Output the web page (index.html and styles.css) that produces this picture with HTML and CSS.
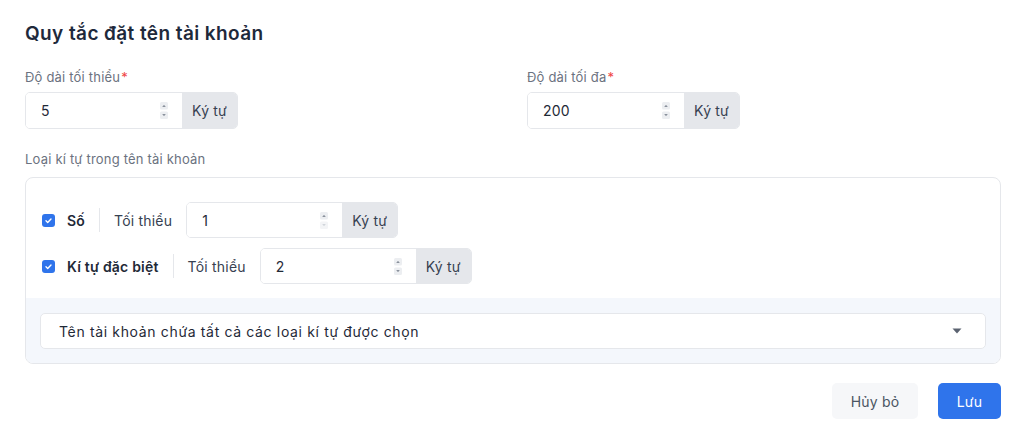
FILE: index.html
```html
<!DOCTYPE html>
<html lang="vi">
<head>
  <meta charset="UTF-8" />
  <meta name="viewport" content="width=device-width, initial-scale=1.0"/>
  <title>Quy tắc đặt tên tài khoản</title>
  <link rel="stylesheet" href="styles.css">
</head>
<body>
  <div class="panel">
    <h2 class="title">Quy tắc đặt tên tài khoản</h2>

    <div class="limits">
      <div class="field">
        <label class="label">Độ dài tối thiểu<span class="req">*</span></label>
        <div class="input-group">
          <div class="num-input">
            <span class="value">5</span>
            <span class="spin">
              <svg width="8" height="17" viewBox="0 0 8 17"><rect x="0" y="0" width="8" height="7.5" rx="1.5" fill="#eceef1"/><path d="M2.2 5 L4 2.8 L5.8 5 Z" fill="#8a919c"/><rect x="0" y="9.5" width="8" height="7.5" rx="1.5" fill="#eceef1"/><path d="M2.2 12 L4 14.2 L5.8 12 Z" fill="#8a919c"/></svg>
            </span>
          </div>
          <span class="addon">Ký tự</span>
        </div>
      </div>
      <div class="field">
        <label class="label">Độ dài tối đa<span class="req">*</span></label>
        <div class="input-group">
          <div class="num-input">
            <span class="value">200</span>
            <span class="spin">
              <svg width="8" height="17" viewBox="0 0 8 17"><rect x="0" y="0" width="8" height="7.5" rx="1.5" fill="#eceef1"/><path d="M2.2 5 L4 2.8 L5.8 5 Z" fill="#8a919c"/><rect x="0" y="9.5" width="8" height="7.5" rx="1.5" fill="#eceef1"/><path d="M2.2 12 L4 14.2 L5.8 12 Z" fill="#8a919c"/></svg>
            </span>
          </div>
          <span class="addon">Ký tự</span>
        </div>
      </div>
    </div>

    <label class="label types-label">Loại kí tự trong tên tài khoản</label>
    <div class="types">
      <div class="type-rows">
        <div class="type-row">
          <span class="check"><svg width="13" height="13" viewBox="0 0 13 13"><rect width="13" height="13" rx="3" fill="#2f74eb"/><path d="M4 6.8 L5.7 8.4 L9 4.9" fill="none" stroke="#fff" stroke-width="1.4" stroke-linecap="round" stroke-linejoin="round"/></svg></span>
          <span class="type-name">Số</span>
          <span class="divider"></span>
          <span class="min-text">Tối thiểu</span>
          <div class="input-group small">
            <div class="num-input">
              <span class="value">1</span>
              <span class="spin">
                <svg width="8" height="17" viewBox="0 0 8 17"><rect x="0" y="0" width="8" height="7.5" rx="1.5" fill="#eceef1"/><path d="M2.2 5 L4 2.8 L5.8 5 Z" fill="#8a919c"/><rect x="0" y="9.5" width="8" height="7.5" rx="1.5" fill="#f3f4f6"/><path d="M2.2 12 L4 14.2 L5.8 12 Z" fill="#d1d5db"/></svg>
              </span>
            </div>
            <span class="addon">Ký tự</span>
          </div>
        </div>
        <div class="type-row">
          <span class="check"><svg width="13" height="13" viewBox="0 0 13 13"><rect width="13" height="13" rx="3" fill="#2f74eb"/><path d="M4 6.8 L5.7 8.4 L9 4.9" fill="none" stroke="#fff" stroke-width="1.4" stroke-linecap="round" stroke-linejoin="round"/></svg></span>
          <span class="type-name">Kí tự đặc biệt</span>
          <span class="divider"></span>
          <span class="min-text">Tối thiểu</span>
          <div class="input-group small">
            <div class="num-input">
              <span class="value">2</span>
              <span class="spin">
                <svg width="8" height="17" viewBox="0 0 8 17"><rect x="0" y="0" width="8" height="7.5" rx="1.5" fill="#eceef1"/><path d="M2.2 5 L4 2.8 L5.8 5 Z" fill="#8a919c"/><rect x="0" y="9.5" width="8" height="7.5" rx="1.5" fill="#eceef1"/><path d="M2.2 12 L4 14.2 L5.8 12 Z" fill="#8a919c"/></svg>
              </span>
            </div>
            <span class="addon">Ký tự</span>
          </div>
        </div>
      </div>
      <div class="types-foot">
        <div class="select">
          <span>Tên tài khoản chứa tất cả các loại kí tự được chọn</span>
          <svg width="10" height="6" viewBox="0 0 10 6"><path d="M0.5 0.5 L9.5 0.5 L5 5.5 Z" fill="#5b6270"/></svg>
        </div>
      </div>
    </div>

    <div class="actions">
      <button class="btn btn-cancel">Hủy bỏ</button>
      <button class="btn btn-save">Lưu</button>
    </div>
  </div>
</body>
</html>
```

FILE: styles.css
```css
* {
  margin: 0;
  padding: 0;
  box-sizing: border-box;
}

body {
  background: #fff;
  font-family: Inter, "Noto Sans", Arial, sans-serif;
  color: #1f2937;
  letter-spacing: 0.2px;
}

.panel {
  padding: 20px 23px 0 25px;
}

.title {
  font-size: 19px;
  font-weight: 600;
  letter-spacing: 0.4px;
  color: #1e293b;
  line-height: 28px;
  margin-bottom: 20px;
}

.limits {
  display: grid;
  grid-template-columns: 1fr 1fr;
  gap: 28px;
}

.label {
  display: block;
  font-size: 13px;
  color: #6b7280;
  line-height: 18px;
  margin-bottom: 6px;
}

.req {
  color: #ef4444;
  margin-left: 1px;
}

.input-group {
  display: flex;
  width: 213px;
  height: 37px;
  border: 1px solid #e5e7eb;
  border-radius: 5px;
  overflow: hidden;
}

.input-group.small {
  width: 212px;
  height: 36px;
}

.num-input {
  flex: 1;
  display: flex;
  align-items: center;
  justify-content: space-between;
  padding: 0 14px 0 15px;
  background: #fff;
  font-size: 14px;
  color: #1f2937;
}

.spin {
  display: flex;
}

.addon {
  display: flex;
  align-items: center;
  padding: 0 10px;
  background: #e5e7eb;
  font-size: 14px;
  color: #374151;
}

.types-label {
  margin-top: 21px;
  margin-bottom: 9px;
}

.types {
  border: 1px solid #e5e7eb;
  border-radius: 8px;
  overflow: hidden;
}

.type-rows {
  display: flex;
  flex-direction: column;
  gap: 10px;
  padding: 24px 16px 14px;
}

.type-row {
  display: flex;
  align-items: center;
  font-size: 14px;
}

.check {
  display: flex;
  margin-right: 12px;
}

.type-name {
  font-weight: 600;
  color: #1f2937;
}

.divider {
  width: 1px;
  height: 24px;
  background: #e5e7eb;
  margin: 0 14px;
}

.min-text {
  color: #374151;
  margin-right: 14px;
}

.types-foot {
  background: #f4f7fc;
  padding: 15px 14px 14px;
}

.select {
  display: flex;
  align-items: center;
  justify-content: space-between;
  height: 36px;
  padding: 0 23px 0 18px;
  background: #fff;
  border: 1px solid #e5e7eb;
  border-radius: 5px;
  font-size: 14px;
  letter-spacing: 0.65px;
  color: #1f2937;
}

.actions {
  display: flex;
  justify-content: flex-end;
  gap: 20px;
  margin-top: 19px;
}

.btn {
  height: 36px;
  border: none;
  border-radius: 5px;
  font-family: inherit;
  font-size: 14px;
  letter-spacing: inherit;
}

.btn-cancel {
  width: 86px;
  background: #f6f7f9;
  color: #4b5563;
}

.btn-save {
  width: 63px;
  background: #2f74eb;
  color: #fff;
}
```
